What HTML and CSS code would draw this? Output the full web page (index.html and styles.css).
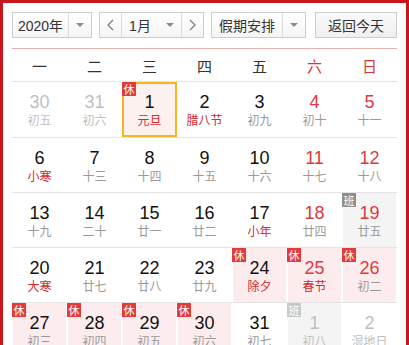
FILE: index.html
```html
<!DOCTYPE html>
<html lang="zh-CN">
<head>
<meta charset="utf-8">
<title>万年历</title>
<link rel="stylesheet" href="styles.css">
</head>
<body>
<div class="cal">
  <div class="toolbar">
    <div class="sel year"><span class="txt">2020年</span><span class="arr"><i class="tri"></i></span></div>
    <div class="mgroup">
      <span class="nav prev"><svg width="7" height="12" viewBox="0 0 7 12"><polyline points="6,1 1,6 6,11" fill="none" stroke="#7a7a7a" stroke-width="1.2"/></svg></span>
      <div class="month"><span class="txt">1月</span><span class="arr plain"><i class="tri"></i></span></div>
      <span class="nav next"><svg width="7" height="12" viewBox="0 0 7 12"><polyline points="1,1 6,6 1,11" fill="none" stroke="#7a7a7a" stroke-width="1.2"/></svg></span>
    </div>
    <div class="sel hol"><span class="txt">假期安排</span><span class="arr"><i class="tri"></i></span></div>
    <div class="btn">返回今天</div>
  </div>
  <div class="week">
    <span>一</span><span>二</span><span>三</span><span>四</span><span>五</span><span class="we">六</span><span class="we">日</span>
  </div>
  <div class="grid">
    <div class="cell"><div class="box other"><div class="num">30</div><div class="lun">初五</div></div></div>
    <div class="cell"><div class="box other"><div class="num">31</div><div class="lun">初六</div></div></div>
    <div class="cell"><div class="box today"><span class="tag rest">休</span><div class="num">1</div><div class="lun fest">元旦</div></div></div>
    <div class="cell"><div class="box"><div class="num">2</div><div class="lun fest">腊八节</div></div></div>
    <div class="cell"><div class="box"><div class="num">3</div><div class="lun">初九</div></div></div>
    <div class="cell"><div class="box"><div class="num red">4</div><div class="lun">初十</div></div></div>
    <div class="cell"><div class="box"><div class="num red">5</div><div class="lun">十一</div></div></div>

    <div class="cell"><div class="box"><div class="num">6</div><div class="lun fest">小寒</div></div></div>
    <div class="cell"><div class="box"><div class="num">7</div><div class="lun">十三</div></div></div>
    <div class="cell"><div class="box"><div class="num">8</div><div class="lun">十四</div></div></div>
    <div class="cell"><div class="box"><div class="num">9</div><div class="lun">十五</div></div></div>
    <div class="cell"><div class="box"><div class="num">10</div><div class="lun">十六</div></div></div>
    <div class="cell"><div class="box"><div class="num red">11</div><div class="lun">十七</div></div></div>
    <div class="cell"><div class="box"><div class="num red">12</div><div class="lun">十八</div></div></div>

    <div class="cell"><div class="box"><div class="num">13</div><div class="lun">十九</div></div></div>
    <div class="cell"><div class="box"><div class="num">14</div><div class="lun">二十</div></div></div>
    <div class="cell"><div class="box"><div class="num">15</div><div class="lun">廿一</div></div></div>
    <div class="cell"><div class="box"><div class="num">16</div><div class="lun">廿二</div></div></div>
    <div class="cell"><div class="box"><div class="num">17</div><div class="lun fest">小年</div></div></div>
    <div class="cell"><div class="box"><div class="num red">18</div><div class="lun">廿四</div></div></div>
    <div class="cell"><div class="box work"><span class="tag ban">班</span><div class="num red">19</div><div class="lun">廿五</div></div></div>

    <div class="cell"><div class="box"><div class="num">20</div><div class="lun fest">大寒</div></div></div>
    <div class="cell"><div class="box"><div class="num">21</div><div class="lun">廿七</div></div></div>
    <div class="cell"><div class="box"><div class="num">22</div><div class="lun">廿八</div></div></div>
    <div class="cell"><div class="box"><div class="num">23</div><div class="lun">廿九</div></div></div>
    <div class="cell"><div class="box holi"><span class="tag rest">休</span><div class="num">24</div><div class="lun fest">除夕</div></div></div>
    <div class="cell"><div class="box holi"><span class="tag rest">休</span><div class="num red">25</div><div class="lun fest">春节</div></div></div>
    <div class="cell"><div class="box holi"><span class="tag rest">休</span><div class="num red">26</div><div class="lun">初二</div></div></div>

    <div class="cell"><div class="box holi"><span class="tag rest">休</span><div class="num">27</div><div class="lun">初三</div></div></div>
    <div class="cell"><div class="box holi"><span class="tag rest">休</span><div class="num">28</div><div class="lun">初四</div></div></div>
    <div class="cell"><div class="box holi"><span class="tag rest">休</span><div class="num">29</div><div class="lun">初五</div></div></div>
    <div class="cell"><div class="box holi"><span class="tag rest">休</span><div class="num">30</div><div class="lun">初六</div></div></div>
    <div class="cell"><div class="box"><div class="num">31</div><div class="lun">初七</div></div></div>
    <div class="cell"><div class="box work other"><span class="tag ban light">班</span><div class="num">1</div><div class="lun">初八</div></div></div>
    <div class="cell"><div class="box other"><div class="num">2</div><div class="lun">湿地日</div></div></div>
  </div>
</div>
</body>
</html>
```

FILE: styles.css
```css
* { box-sizing: border-box; margin: 0; padding: 0; }
body { margin: 0; background: #fff; font-family: "Liberation Sans", Arial, "Noto Sans CJK SC", sans-serif; }

.cal {
  width: 409px;
  height: 345px;
  overflow: hidden;
  border: 3px solid #c8161d;
  border-bottom: 0;
  padding: 9px 9px 0;
}

/* toolbar */
.toolbar {
  display: flex;
  height: 26px;
  margin-bottom: 10px;
  font-size: 14px;
  color: #333;
  font-family: "Liberation Sans", "Noto Sans CJK SC", sans-serif;
}
.sel, .btn, .mgroup {
  display: flex;
  height: 26px;
  border: 1px solid #cdcdcd;
  background: linear-gradient(#ffffff, #f5f5f5);
}
.year { width: 80px; margin-right: 7px; }
.mgroup { width: 105px; margin-right: 7px; }
.hol { width: 95px; margin-right: 9px; }
.btn { width: 82px; justify-content: center; align-items: center; background: linear-gradient(#fafafa, #efefef); }
.txt { flex: 1; display: flex; align-items: center; justify-content: center; }
.arr { width: 23px; border-left: 1px solid #dcdcdc; display: flex; align-items: center; justify-content: center; }
.arr.plain { border-left: 0; }
.tri {
  width: 0; height: 0;
  border-left: 4px solid transparent;
  border-right: 4px solid transparent;
  border-top: 4px solid #8a8a8a;
}
.nav { width: 22px; display: flex; align-items: center; justify-content: center; }
.nav.prev { border-right: 1px solid #dcdcdc; }
.nav.next { border-left: 1px solid #dcdcdc; }
.month { flex: 1; display: flex; }

/* weekday header */
.week {
  display: grid;
  grid-template-columns: repeat(7, 55px);
  height: 34px;
  border-top: 1px solid #e8b0aa;
  border-bottom: 1px solid #e3e3e3;
  align-items: center;
  text-align: center;
  font-size: 15px;
  color: #333;
  font-family: "Noto Sans CJK SC", sans-serif;
}
.week .we { color: #d9363b; }

/* days grid */
.grid {
  display: grid;
  grid-template-columns: repeat(7, 55px);
  grid-template-rows: 56px repeat(4, 55px);
}
.cell { display: flex; border-bottom: 1px solid #e4e4e4; }
.box {
  flex: 1;
  margin: 0 1px;
  position: relative;
  text-align: center;
  padding-top: 10px;
}
.num { font-size: 18px; line-height: 20px; color: #111; }
.num.red { color: #dd3a3f; }
.lun { font-size: 12px; line-height: 16px; color: #9a9a9a; font-family: "Noto Sans CJK SC", sans-serif; }
.lun.fest { color: #d6282d; }

.other .num, .other .lun { color: #bfbfbf; }
.holi { background: #fdeced; }
.work { background: #f4f4f4; }
.today {
  margin: 0;
  border: 2px solid #f7b522;
  background: #fdf1f0;
  padding-top: 8px;
}

.tag {
  position: absolute;
  left: -1px;
  top: 0;
  width: 14px;
  height: 14px;
  font-size: 11px;
  line-height: 14px;
  color: #fff;
  text-align: center;
  font-family: "Noto Sans CJK SC", sans-serif;
}
.today .tag { left: -2px; top: -2px; }
.rest { background: #e23b3b; }
.ban { background: #8e8e8e; }
.ban.light { background: #c9c9c9; }
```
